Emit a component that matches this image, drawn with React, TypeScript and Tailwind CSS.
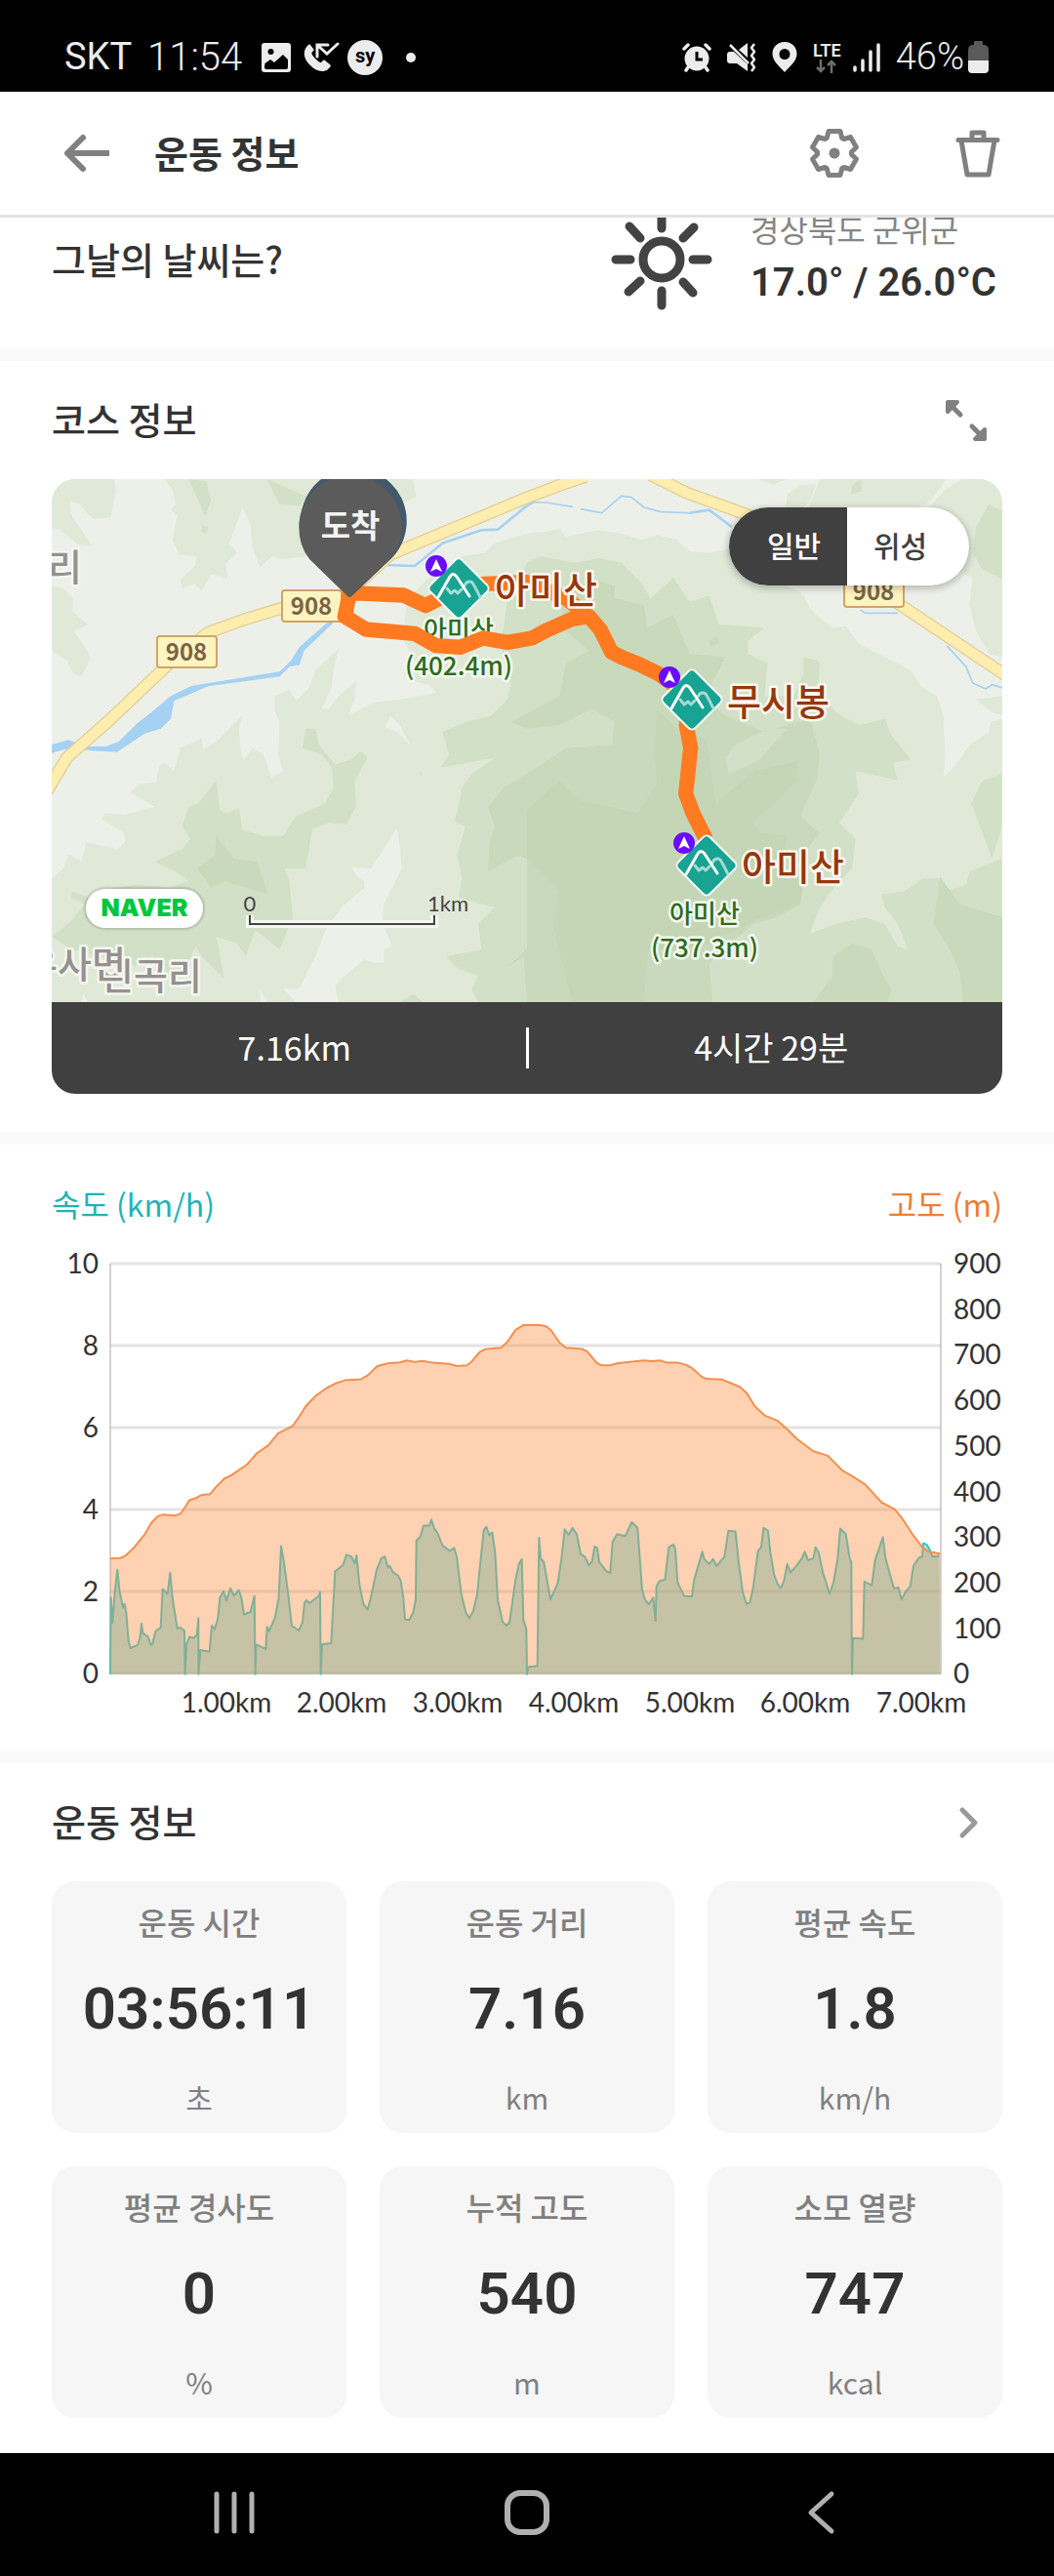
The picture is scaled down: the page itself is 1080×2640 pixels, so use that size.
import React from "react";

const ALTITUDE =
  "219,1090 250,1089 265,1083 290,1063 325,1025 345,995 365,977 380,973 420,975 435,970 450,951 462,934 480,929 500,920 525,918 545,898 570,876 590,868 640,838 670,808 705,787 735,755 780,735 800,710 820,682 850,655 885,633 910,622 940,613 990,610 1010,600 1040,575 1075,567 1110,565 1130,560 1155,564 1180,561 1210,566 1260,569 1285,575 1315,573 1330,563 1355,537 1370,530 1420,526 1440,510 1465,478 1490,465 1540,465 1560,469 1575,480 1600,512 1620,526 1670,529 1685,536 1715,567 1730,573 1755,573 1780,567 1860,560 1885,562 1910,560 1930,566 1965,566 1990,572 2010,582 2035,602 2050,609 2100,611 2125,620 2155,631 2175,647 2200,682 2230,707 2270,721 2300,744 2330,770 2380,803 2425,815 2470,855 2500,870 2540,892 2590,940 2630,958 2655,985 2685,1025 2715,1060 2735,1072 2770,1077";

const SPEED =
  "219,1400 221,1195 226,1262 233,1180 241,1120 247,1175 258,1222 263,1212 268,1235 275,1310 281,1330 303,1322 311,1300 315,1265 319,1290 335,1300 344,1322 349,1318 358,1285 374,1275 380,1172 395,1185 403,1128 410,1195 425,1278 434,1275 447,1283 449,1400 453,1320 463,1300 475,1303 485,1295 490,1250 490,1400 496,1335 524,1340 531,1270 540,1280 550,1250 556,1195 567,1178 576,1203 588,1170 600,1190 614,1175 622,1195 630,1240 650,1233 662,1190 665,1400 667,1320 697,1333 701,1273 707,1285 725,1250 737,1195 744,1057 752,1095 765,1180 777,1270 798,1283 810,1262 816,1208 822,1202 832,1210 860,1190 864,1180 866,1400 870,1320 898,1317 910,1125 935,1107 945,1080 960,1085 970,1103 976,1082 985,1160 997,1212 1010,1227 1020,1195 1038,1120 1052,1090 1063,1085 1073,1115 1078,1110 1088,1127 1103,1135 1112,1150 1120,1195 1125,1253 1138,1255 1150,1235 1158,1200 1160,1042 1172,1032 1182,1002 1200,1002 1206,986 1215,1010 1224,1020 1240,1055 1263,1070 1276,1062 1284,1085 1298,1185 1312,1235 1323,1250 1335,1230 1347,1185 1358,1090 1367,1015 1375,1005 1384,1028 1393,1020 1402,1075 1410,1200 1425,1260 1437,1270 1446,1262 1458,1190 1464,1150 1475,1105 1484,1092 1489,1255 1498,1280 1500,1400 1503,1381 1532,1378 1537,1035 1542,1090 1552,1100 1562,1150 1572,1200 1580,1185 1595,1155 1606,1090 1616,1012 1628,1027 1640,1008 1653,1025 1665,1078 1678,1085 1690,1108 1700,1098 1708,1058 1716,1062 1722,1100 1745,1125 1756,1128 1763,1046 1777,1025 1802,1030 1822,993 1840,1008 1854,1175 1863,1200 1874,1213 1888,1195 1895,1257 1898,1165 1908,1150 1924,1147 1936,1060 1950,1053 1956,1065 1963,1155 1983,1190 2007,1192 2013,1150 2028,1105 2039,1072 2045,1092 2060,1105 2072,1092 2083,1110 2107,1085 2119,1016 2141,1018 2150,1095 2163,1180 2175,1212 2185,1208 2195,1170 2210,1070 2220,1060 2227,1008 2241,1016 2248,1073 2260,1135 2270,1158 2280,1170 2290,1150 2300,1105 2310,1128 2328,1110 2345,1090 2354,1072 2364,1095 2380,1090 2387,1060 2397,1075 2410,1130 2418,1150 2430,1185 2442,1155 2455,1090 2463,1010 2480,1025 2492,1090 2497,1100 2499,1400 2502,1303 2533,1305 2537,1152 2560,1162 2570,1095 2594,1033 2602,1090 2615,1130 2628,1170 2642,1168 2651,1200 2665,1178 2678,1165 2688,1110 2705,1088 2715,1085 2718,1050 2728,1052 2740,1070 2746,1085 2768,1083";

const STATS = [
  { label: "운동 시간", value: "03:56:11", unit: "초" },
  { label: "운동 거리", value: "7.16", unit: "km" },
  { label: "평균 속도", value: "1.8", unit: "km/h" },
  { label: "평균 경사도", value: "0", unit: "%" },
  { label: "누적 고도", value: "540", unit: "m" },
  { label: "소모 열량", value: "747", unit: "kcal" },
];

const polar = (r: number, deg: number) => {
  const a = (deg * Math.PI) / 180;
  return `${(r * Math.cos(a)).toFixed(1)},${(r * Math.sin(a)).toFixed(1)}`;
};

const GEAR = [0, 1, 2, 3, 4, 5]
  .map((k) => {
    const c = -90 + k * 60;
    return `${k === 0 ? "M" : "L"}${polar(17.5, c - 26)} L${polar(23.3, c - 15)} L${polar(23.3, c + 15)} L${polar(17.5, c + 26)}`;
  })
  .join(" ");

function StatusBar() {
  return (
    <div className="flex h-[94px] items-center justify-between bg-black pt-[23px] pr-[67px] pl-[66px] font-[Roboto,sans-serif] text-[#ececec]">
      <div className="flex items-center">
        <span className="text-[38px]">SKT</span>
        <span className="ml-4 text-[40px] font-light">11:54</span>
        <svg className="ml-5 h-[30px] w-[30px]" viewBox="0 0 30 30" aria-hidden="true">
          <rect width="30" height="30" rx="3" fill="#ececec" />
          <circle cx="9.500" cy="9" r="3" fill="#000" />
          <path d="M3.500 21 L9 17 L13 20 L22 12 L27 17 V25 Q27 27 25 27 H5 Q3 27 3 25 Z" fill="#000" />
        </svg>
        <svg className="ml-3 h-[32px] w-[38px]" viewBox="0 0 38 32" fill="none" aria-hidden="true">
          <path
            d="M5 4 C0 9 1 17 7 23 C13 30 21 32 26 28 L28 26 C29 25 29 24 28 23 L23 19 C22 18 21 19 20 20 C19 22 17 21 13 17 C9 13 9 11 10 10 C12 9 12 8 11 7 L8 3 C7 2 6 3 5 4 Z"
            fill="#ececec"
          />
          <path d="M15 15 V3 H26 M16 4 L25 12 L36 2" stroke="#ececec" strokeWidth="3" strokeLinecap="round" />
        </svg>
        <span className="ml-2 flex h-9 w-9 items-center justify-center rounded-full bg-[#ececec] pb-1 text-xl font-bold text-black">
          sy
        </span>
        <span className="ml-6 h-[10px] w-[10px] rounded-full bg-[#ececec]" />
      </div>
      <div className="flex items-center">
        <svg className="h-[30px] w-[30px]" viewBox="0 0 30 30" fill="none" aria-hidden="true">
          <circle cx="15" cy="16" r="12.500" fill="#ececec" />
          <path d="M6 25 L4 28 M24 25 L26 28 M2 6 L6 2 M28 6 L24 2" stroke="#ececec" strokeWidth="3.500" strokeLinecap="round" />
          <path d="M15 9 V17 H21" stroke="#000" strokeWidth="3" />
        </svg>
        <svg className="ml-4 h-[30px] w-[30px]" viewBox="0 0 30 30" fill="none" aria-hidden="true">
          <path d="M0 12 Q0 9 3 9 H7 L21 22 V29 L10 21 H3 Q0 21 0 18 Z M12 7 L21 0 V15 Z" fill="#ececec" />
          <path d="M3 2 L22 21" stroke="#ececec" strokeWidth="2.500" />
          <path d="M28 1 L25 5 L28 9 L25 13 L28 17 L25 21 L28 25 L25 29" stroke="#ececec" strokeWidth="2.500" strokeLinejoin="round" />
        </svg>
        <svg className="ml-4 h-[31px] w-[26px]" viewBox="0 0 26 31" aria-hidden="true">
          <path
            d="M13 0 C5 0 0.500 6 0.500 12 C0.500 20 8 25 13 31 C18 25 25.500 20 25.500 12 C25.500 6 21 0 13 0 Z M13 7 A5.500 5.500 0 1 1 13 18 A5.500 5.500 0 1 1 13 7 Z"
            fill="#ececec"
            fillRule="evenodd"
          />
        </svg>
        <div className="ml-4 flex flex-col items-center">
          <span className="text-[18px] leading-[18px] font-semibold">LTE</span>
          <svg className="h-[14px] w-[22px]" viewBox="0 0 22 14" fill="none" aria-hidden="true">
            <path d="M5 0 V12 M1 8 L5 12 L9 8 M16 14 V2 M12 6 L16 2 L20 6" stroke="#6d6d6d" strokeWidth="2.500" />
          </svg>
        </div>
        <svg className="ml-3 h-[30px] w-[28px]" viewBox="0 0 28 30" fill="none" aria-hidden="true">
          <path d="M2 25 V28 M10 18 V28 M18 9 V28 M26 2 V28" stroke="#ececec" strokeWidth="3.500" strokeLinecap="round" />
        </svg>
        <span className="ml-4 text-[38px] font-light">46%</span>
        <svg className="ml-1 h-[33px] w-[21px]" viewBox="0 0 21 33" aria-hidden="true">
          <path d="M6 1 Q6 0 7 0 H14 Q15 0 15 1 V4 H17 Q21 5 21 9 V20 H0 V9 Q0 5 4 4 H6 Z" fill="#5a5a5a" />
          <path d="M0 20 H21 V29 Q21 33 17 33 H4 Q0 33 0 29 Z" fill="#ececec" />
        </svg>
      </div>
    </div>
  );
}

function Header() {
  return (
    <header className="flex h-[129px] items-center border-b-3 border-[#e3e3e3] bg-white pr-[53px] pl-[64px]">
      <button type="button" aria-label="뒤로">
        <svg className="h-[48px] w-[50px]" viewBox="0 0 50 48" fill="none" aria-hidden="true">
          <path d="M48 24 H6" stroke="#808080" strokeWidth="6" />
          <path d="M21 8 L5 24 L21 40" stroke="#808080" strokeWidth="6" strokeLinejoin="round" strokeLinecap="round" />
        </svg>
      </button>
      <h1 className="ml-[44px] flex-1 pb-1 text-[38px] font-bold">운동 정보</h1>
      <button type="button" aria-label="설정">
        <svg className="h-[56px] w-[56px]" viewBox="-28 -28 56 56" fill="none" aria-hidden="true">
          <path d={GEAR + " Z"} stroke="#808080" strokeWidth="5" strokeLinejoin="round" />
          <circle r="5.500" fill="#808080" />
        </svg>
      </button>
      <button type="button" aria-label="삭제" className="ml-[94px]">
        <svg className="h-[56px] w-[50px]" viewBox="0 0 50 56" fill="none" aria-hidden="true">
          <path
            d="M5 14.500 H45 M19 14 V7 H31 V14 M8 15 L14 50 H36 L42 15"
            stroke="#808080"
            strokeWidth="5"
            strokeLinejoin="round"
            strokeLinecap="round"
          />
        </svg>
      </button>
    </header>
  );
}

function Weather() {
  return (
    <section className="flex h-[134px] items-center overflow-hidden pr-[53px] pb-[48px] pl-[53px]">
      <h2 className="flex-1 pb-1 text-[38px] font-medium">그날의 날씨는?</h2>
      <svg className="h-[108px] w-[108px]" viewBox="-54 -54 108 108" fill="none" aria-label="맑음">
        <g stroke="#434343" strokeWidth="9" strokeLinecap="round">
          <circle r="19" />
          <path d="M0 -32 V-47 M0 32 V47 M-32 0 H-47 M32 0 H47 M-22 -22 L-33 -34 M22 -22 L33 -33 M-22 22 L-34 33 M22 23 L32 34" />
        </g>
      </svg>
      <div className="ml-[37px] w-[258px] whitespace-nowrap">
        <p className="text-[32px] leading-[48px] text-[#858585]">경상북도 군위군</p>
        <p className="font-[Roboto,sans-serif] text-[40px] leading-[64px] font-semibold">17.0° / 26.0°C</p>
      </div>
    </section>
  );
}

function RoadSign({ x, y }: { x: number; y: number }) {
  return (
    <g>
      <rect x={x + 1} y={y + 1} width="61" height="32" rx="3" fill="#fdf4c0" stroke="#cfa468" strokeWidth="2" />
      <text x={x + 31} y={y + 26} textAnchor="middle" fontSize="24" fontWeight="700" fill="#7b6444">
        908
      </text>
    </g>
  );
}

function Peak({ x, y }: { x: number; y: number }) {
  return (
    <g transform={`translate(${x} ${y})`} fill="none">
      <rect x="-23" y="-23" width="46" height="46" rx="5" transform="rotate(45)" fill="#18a393" stroke="#f4faf7" strokeWidth="2" />
      <g strokeWidth="3" strokeLinecap="round" strokeLinejoin="round">
        <path d="M6 -3 Q9 -9 14 -6 Q16 -3 22 9 M-12 0 L-8 5 L-4 2 L-1 5 L3 1" stroke="#a5dbd3" />
        <path d="M-21 9 L-9 -12 Q-6 -17 -2 -12 L11 8" stroke="#fff" />
      </g>
      <circle cx="-23" cy="-23" r="11" fill="#6a0dff" />
      <path d="M-23 -30 L-17 -17 L-23 -20 L-29 -17 Z" fill="#fff" />
    </g>
  );
}

function TrailMap() {
  return (
    <svg className="block h-auto w-full" viewBox="53 491 974 536" role="img" aria-label="아미산 코스 지도">
      <rect x="53" y="491" width="974" height="536" fill="#edf0e9" />
      <g transform="translate(40 380) scale(0.33333)">
        <g fill="#e0e9d8">
          <path d="M39 333 H230 L236 370 L220 450 L170 455 L150 440 L125 410 L95 400 L98 440 L130 490 L165 540 L120 535 L90 510 L60 485 H39 Z" />
          <path d="M39 660 L75 670 L105 700 L103 740 L150 780 L108 800 L140 850 L160 885 L130 940 L105 930 L85 890 L39 860 Z" />
          <path d="M385 333 H1150 L1160 390 L1110 410 L900 560 L750 580 L715 570 L680 605 L655 540 L650 470 L625 420 L600 490 L585 530 L610 560 L575 590 L580 640 L530 625 L500 675 L475 655 L440 670 L435 640 L480 600 L485 570 L430 565 L410 520 L425 445 L405 425 L420 410 L410 365 Z" />
          <path d="M39 1560 L75 1530 L90 1485 L130 1510 L145 1450 L240 1470 L265 1450 L260 1420 L195 1380 L200 1360 L260 1365 L300 1355 L355 1340 L280 1295 L310 1270 L360 1265 L370 1215 L385 1205 L415 1230 L435 1160 L500 1130 L505 1165 L545 1140 L625 1060 L615 1100 L620 1170 L630 1195 L655 1160 L690 1180 L715 1250 L750 1230 L735 1180 L740 1080 L725 1050 L725 1000 L770 980 L790 1015 L830 975 L850 920 L920 855 L905 920 L900 970 L870 1040 L890 1040 L920 1000 L975 955 L970 1010 L950 1060 L1030 1020 L1110 1010 L1220 990 L1200 965 L1140 950 L1120 930 L1160 900 L1120 830 L1130 700 L1240 600 L1300 570 L1370 560 L1400 530 L1500 500 L1560 495 L1600 485 L1620 510 L1720 490 L1790 500 L1850 520 L1900 505 L1960 520 L2000 555 L2060 560 L2110 550 L2130 530 L2200 600 L2240 640 L2320 670 L2350 690 L2370 730 L2400 760 L2440 790 L2480 785 L2520 840 L2600 880 L2680 920 L2710 970 L2760 1000 L2780 1060 L2785 1180 L2780 1250 L2820 1210 L2860 1150 L2920 1110 L2925 1080 L2961 1070 V1941 H39 Z" />
          <path d="M2210 333 L2255 350 L2300 333 Z M2340 350 L2390 350 L2370 400 L2320 450 L2290 480 L2300 380 Z M2400 333 H2790 L2740 400 L2680 430 L2500 450 L2350 460 Z M2840 333 H2961 V880 L2920 870 L2880 800 L2860 720 L2870 640 L2800 600 L2690 560 L2640 500 L2720 440 L2780 370 Z M2880 1010 L2961 1000 V1060 L2930 1050 Z" />
        </g>
        <g fill="#edf0e9">
          <path d="M1100 1405 L1110 1470 L1115 1530 L1090 1580 L1060 1640 L1055 1700 L1085 1768 L1060 1780 L1060 1820 L1030 1820 L1000 1810 L950 1850 L910 1890 L920 1941 H790 L750 1900 L800 1900 L850 1800 L880 1720 L930 1650 L1000 1590 L1000 1570 L975 1550 L960 1525 L1020 1530 L1060 1470 Z" />
          <path d="M1065 1095 L1080 1060 L1110 1090 L1140 1150 L1100 1110 Z M680 1900 L700 1941 H680 Z M135 1915 L150 1941 H130 Z" />
        </g>
        <g fill="#d3e0c8">
          <path d="M460 333 L515 340 L528 400 L510 450 L490 400 Z M500 475 L520 480 L515 500 L500 495 Z M700 333 L830 390 L800 415 L740 410 Z" />
          <path d="M2500 350 L2525 335 L2530 370 L2495 380 Z M2920 410 L2961 430 V640 L2900 610 L2870 560 L2880 480 Z" />
          <path d="M1500 590 L1540 570 L1650 590 L1720 575 L1790 590 L1850 650 L1880 700 L1950 635 L2000 710 L2060 690 L2090 780 L2230 790 L2180 830 L2180 870 L2240 900 L2230 1000 L2320 1000 L2350 930 L2350 880 L2400 895 L2395 980 L2450 1050 L2520 1090 L2600 1070 L2620 1120 L2680 1195 L2625 1205 L2640 1260 L2510 1230 L2520 1300 L2460 1390 L2510 1440 L2500 1530 L2450 1580 L2400 1650 L2370 1730 L2450 1700 L2540 1680 L2600 1700 L2640 1770 L2670 1780 L2640 1700 L2600 1650 L2590 1610 L2660 1600 L2720 1560 L2770 1560 L2790 1600 L2850 1580 L2860 1540 L2961 1500 V1941 H1350 L1330 1900 L1350 1860 L1290 1840 L1250 1800 L1360 1780 L1350 1700 L1400 1650 L1290 1620 L1300 1560 L1285 1490 L1310 1400 L1275 1385 L1290 1340 L1300 1280 L1330 1240 L1400 1190 L1235 1220 L1260 1180 L1240 1110 L1310 1080 L1390 1060 L1440 1010 L1450 960 L1420 850 L1440 700 Z" />
          <path d="M545 1258 L555 1350 L580 1360 L615 1345 L625 1410 L690 1430 L750 1430 L790 1370 L880 1330 L905 1280 L900 1220 L870 1180 L810 1160 L820 1100 L850 1100 L860 1150 L910 1210 L960 1195 L990 1170 L1010 1190 L970 1260 L975 1340 L945 1395 L890 1390 L840 1410 L820 1530 L755 1530 L770 1570 L780 1680 L740 1780 L665 1720 L635 1800 L610 1760 L545 1740 L570 1870 L500 1800 L480 1770 L440 1860 L390 1870 L350 1800 L300 1830 L100 1780 L39 1740 L100 1690 L140 1640 L100 1620 L100 1600 L150 1620 L230 1590 L300 1580 L400 1590 L460 1570 L420 1540 L355 1510 L440 1470 L465 1440 L440 1400 L460 1340 L490 1330 Z" />
          <path d="M2900 1260 L2961 1240 V1400 L2930 1500 L2865 1330 Z M1110 1941 L1150 1915 L1180 1941 Z M1165 1232 L1178 1235 L1175 1242 Z" />
        </g>
        <g fill="#c8dabb">
          <path d="M545 1430 L600 1500 L670 1510 L705 1610 L640 1590 L570 1570 L530 1590 L485 1530 L540 1490 Z" />
          <path d="M1600 700 L1700 640 L1770 660 L1770 700 L1860 720 L1870 790 L1950 750 L2000 870 L2110 880 L2070 960 L2040 1000 L2110 1060 L2230 1110 L2370 1070 L2400 1180 L2390 1260 L2340 1370 L2400 1420 L2370 1460 L2330 1520 L2350 1560 L2340 1640 L2270 1680 L2200 1700 L2100 1780 L2060 1820 L2070 1941 H1500 L1490 1800 L1430 1840 L1500 1780 L1500 1500 L1470 1490 L1380 1540 L1385 1450 L1400 1400 L1380 1340 L1430 1280 L1500 1240 L1620 1160 L1760 1150 L1770 1080 L1700 1040 L1600 1090 L1500 1100 L1450 1080 L1600 1000 L1620 900 L1690 860 L1620 800 Z" />
          <path d="M2380 1941 L2440 1860 L2440 1800 L2500 1760 L2560 1780 L2590 1850 L2620 1900 L2610 1941 Z M2770 1555 L2830 1640 L2961 1680 V1941 H2840 L2830 1850 L2800 1780 L2750 1700 Z M2060 830 L2085 815 L2090 835 L2065 850 Z" />
          <path d="M2140 1150 L2240 1100 L2300 1100 L2210 1200 L2120 1240 L2110 1190 Z" fill="#d3e0c8" />
        </g>
        <path
          fill="#c4d6b5"
          d="M1600 1260 L1660 1320 L1840 1360 L1900 1270 L1890 1170 L1900 1040 L1960 1100 L2050 1130 L2080 1330 L2200 1230 L2330 1200 L2330 1260 L2260 1330 L2190 1390 L2220 1420 L2300 1430 L2280 1540 L2350 1560 L2340 1640 L2200 1690 L2060 1760 L1960 1780 L1870 1780 L1860 1941 H1640 L1620 1870 L1580 1700 L1600 1600 L1500 1500 L1500 1350 Z"
        />
        <g fill="#a5d2f2">
          <path d="M39 1150 L90 1135 L150 1155 L205 1155 L245 1140 L300 1085 L345 1050 L405 1000 L470 968 L740 925 L775 890 L800 850 L890 770 L905 775 L815 860 L800 905 L770 910 L740 940 L520 970 L415 1015 L405 1070 L375 1100 L325 1115 L240 1172 L160 1168 L95 1160 L39 1175 Z" />
        </g>
        <g fill="none" stroke="#a5d2f2" strokeLinejoin="round">
          <path strokeWidth="8" d="M1060 597 L1155 600 L1240 530 L1360 490 L1410 488 L1500 415 L1520 404 M2000 437 L2060 428 L2130 480" />
          <path strokeWidth="5" d="M1500 403 L1560 405 L1640 418 M1665 425 L1730 437 L1790 385 L1820 388 L1860 420 L1910 433 L2010 438 M2525 735 L2540 745 H2640 M2790 845 L2850 910 L2870 960 L2910 978 L2930 965 L2961 975" />
        </g>
        <g fill="none" strokeLinejoin="round">
          <path stroke="#e3cf96" strokeWidth="39" d="M20 1300 L85 1190 L210 1080 L400 900 L520 805 L630 765 L745 730 L930 700 L1080 565 L1500 390 L1600 352 L1680 325 M1880 320 L1990 375 L2170 440 L2300 500 L2500 620 L2640 715 L2980 942" />
          <path stroke="#fdeeb0" strokeWidth="31" d="M20 1300 L85 1190 L210 1080 L400 900 L520 805 L630 765 L745 730 L930 700 L1080 565 L1500 390 L1600 352 L1680 325 M1880 320 L1990 375 L2170 440 L2300 500 L2500 620 L2640 715 L2980 942" />
        </g>
      </g>
      <g
        fontFamily="'Noto Sans CJK KR', sans-serif"
        stroke="#f4f7f0"
        strokeWidth="5"
        strokeLinejoin="round"
        paintOrder="stroke"
        fontWeight="500"
      >
        <g fontSize="38" fill="#989090">
          <text x="49" y="595">리</text>
          <text x="102" y="1014">인곡리</text>
          <text x="24" y="1002">우사면</text>
        </g>
        <g fontSize="26" fill="#2f6b1b" textAnchor="middle">
          <text x="470" y="655">아미산</text>
          <text x="470" y="692">(402.4m)</text>
          <text x="722" y="946">아미산</text>
          <text x="722" y="981">(737.3m)</text>
        </g>
      </g>
      <g fontFamily="'Noto Sans CJK KR', sans-serif">
        <RoadSign x={160} y={651} />
        <RoadSign x={288} y={604} />
        <RoadSign x={864} y={589} />
      </g>
      <g transform="translate(40 380) scale(0.33333)" fill="none" stroke="#ff7a20" strokeWidth="46" strokeLinejoin="round">
        <path d="M955 683 L1120 690 L1188 722 L1290 670 L1370 655 L1500 650 L1620 700 L1690 755 M955 683 L940 755 L1005 795 L1155 808 L1220 845 L1295 850 L1365 822 L1440 835 L1515 822 L1560 798 L1640 763 L1690 755 L1725 795 L1760 865 L1790 880 L1850 905 L1905 932 L2000 1000 L1990 1090 L2003 1160 L1988 1300 L2010 1360 L2050 1440" />
      </g>
      <Peak x={470} y={603} />
      <Peak x={709} y={717} />
      <Peak x={724} y={887} />
      <g
        fontFamily="'Noto Sans CJK KR', sans-serif"
        fontSize="38"
        fontWeight="500"
        fill="#96380a"
        stroke="#fbf8f2"
        strokeWidth="5"
        strokeLinejoin="round"
        paintOrder="stroke"
      >
        <text x="507" y="618">아미산</text>
        <text x="745" y="733">무시봉</text>
        <text x="760" y="902">아미산</text>
      </g>
      <g transform="translate(40 380) scale(0.33333)">
        <path d="M957 697 L1085 575 A163 163 0 1 0 845 570 Z" fill="#44586c" />
        <path d="M952 697 L832 580 Q799 540 799 480 A158 158 0 0 1 1115 480 Q1115 540 1080 575 Z" fill="#5b5b5b" />
      </g>
      <text x="359" y="551" textAnchor="middle" fontFamily="'Noto Sans CJK KR', sans-serif" fontSize="33" fontWeight="700" fill="#f4f4f4">
        도착
      </text>
      <path d="M256 938 V947 H445 V938" fill="none" stroke="#f5f8f2" strokeWidth="8" />
      <path d="M256 938 V947 H445 V938" fill="none" stroke="#444" strokeWidth="2" />
      <g fontFamily="Lato, sans-serif" fontSize="22" fill="#444">
        <text x="256" y="934" textAnchor="middle">0</text>
        <text x="438" y="934">1km</text>
      </g>
    </svg>
  );
}

function Course() {
  return (
    <section className="px-[53px] pb-[39px]">
      <div className="flex h-[121px] items-center justify-between pr-3">
        <h2 className="pb-1 text-[38px] font-medium">코스 정보</h2>
        <button type="button" aria-label="지도 확대">
          <svg className="h-[50px] w-[50px]" viewBox="0 0 50 50" aria-hidden="true">
            <g fill="#808080" stroke="#808080" strokeLinejoin="round" strokeLinecap="round">
              <path d="M6 6 H16 L6 16 Z M44 44 H34 L44 34 Z" strokeWidth="4" />
              <path d="M7 7 L19 19 M43 43 L31 31" strokeWidth="5" />
            </g>
          </svg>
        </button>
      </div>
      <div className="overflow-hidden rounded-3xl">
        <div className="relative">
          <TrailMap />
          <div className="absolute top-[29px] right-[34px] flex h-20 w-[246px] overflow-hidden rounded-full bg-white text-[30px] font-medium shadow-[0_2px_6px_2px_rgba(0,0,0,0.2)]">
            <button type="button" className="flex-1 bg-[#404040] pb-1 pl-3 text-white">
              일반
            </button>
            <button type="button" className="flex-1 pr-4 pb-1 text-[#404040]">
              위성
            </button>
          </div>
          <div className="absolute bottom-[76px] left-[35px] flex h-10 w-[120px] items-center justify-center rounded-full bg-white font-[Inter,sans-serif] text-[25px] font-black text-[#03c73c] shadow-[0_0_2px_2px_rgba(0,0,0,0.15)]">
            NAVER
          </div>
        </div>
        <div className="flex h-[94px] items-center bg-[#404040] text-center text-[34px] text-white">
          <span className="flex-1 pb-1 pl-3">7.16km</span>
          <span className="h-[42px] w-[3px] bg-white" />
          <span className="flex-1 pb-1 pl-3">4시간 29분</span>
        </div>
      </div>
    </section>
  );
}

function Chart() {
  return (
    <section>
      <div className="flex h-[92px] items-center justify-between px-[53px] pt-7 text-[32px]">
        <span className="text-[#1fb3b8]">속도 (km/h)</span>
        <span className="text-[#ef7d31]">고도 (m)</span>
      </div>
      <svg className="block h-auto w-full" viewBox="0 1265 1080 529" role="img" aria-label="속도와 고도 그래프">
        <g stroke="#e3e3e3" strokeWidth="3">
          {[0, 1, 2, 3, 4, 5].map((i) => (
            <line key={i} x1="113" x2="964" y1={1295 + i * 84} y2={1295 + i * 84} />
          ))}
        </g>
        <path d="M113 1295 V1716 M964 1295 V1716" stroke="#a5a5a5" strokeWidth="1" />
        <g transform="translate(40 1180) scale(0.33333 0.3827)" strokeLinejoin="round">
          <polygon points={SPEED + " 2770,1400"} fill="#2fc8cf" fillOpacity="0.45" />
          <polyline points={SPEED} fill="none" stroke="#2fc8cf" strokeWidth="2" vectorEffect="non-scaling-stroke" />
          <polygon points={"219,1400 " + ALTITUDE + " 2770,1400"} fill="#ff8c41" fillOpacity="0.4" />
          <polyline points={ALTITUDE} fill="none" stroke="#f58f4c" strokeWidth="2" vectorEffect="non-scaling-stroke" />
        </g>
        <g fontFamily="Lato, sans-serif" fontSize="28" fill="#333">
          {[10, 8, 6, 4, 2, 0].map((v, i) => (
            <text key={v} x="101" y={1305 + i * 84} textAnchor="end">
              {v}
            </text>
          ))}
          {[900, 800, 700, 600, 500, 400, 300, 200, 100, 0].map((v, i) => (
            <text key={v} x="977" y={Math.round(1305 + i * 46.7)}>
              {v}
            </text>
          ))}
          {[1, 2, 3, 4, 5, 6, 7].map((v) => (
            <text key={v} x={Math.round(113 + v * 118.7)} y="1755" textAnchor="middle">
              {v}.00km
            </text>
          ))}
        </g>
      </svg>
    </section>
  );
}

function Stats() {
  return (
    <section className="px-[53px] pb-9">
      <div className="flex h-[121px] items-center justify-between pr-[18px]">
        <h2 className="pb-1 text-[38px] font-medium">운동 정보</h2>
        <button type="button" aria-label="운동 정보 더 보기">
          <svg className="h-10 w-[34px]" viewBox="0 0 34 40" fill="none" aria-hidden="true">
            <path d="M11 7 L24 20 L11 33" stroke="#999" strokeWidth="5" strokeLinecap="round" strokeLinejoin="round" />
          </svg>
        </button>
      </div>
      <div className="grid grid-cols-3 gap-[34px]">
        {STATS.map((s) => (
          <div
            key={s.label}
            className="flex h-[258px] flex-col items-center justify-between rounded-3xl bg-[#f6f6f6] pt-[17px] pb-[13px] text-[#808080]"
          >
            <span className="text-[32px] leading-[48px] font-medium">{s.label}</span>
            <span className="font-[Roboto,sans-serif] text-[60px] leading-[80px] font-semibold text-[#333]">
              {s.value}
            </span>
            <span className="text-[30px] leading-[48px]">{s.unit}</span>
          </div>
        ))}
      </div>
    </section>
  );
}

function SystemNav() {
  return (
    <nav className="flex h-[126px] items-center justify-between bg-black px-[20%] pb-1">
      <button type="button" aria-label="최근 앱">
        <svg className="h-12 w-12" viewBox="0 0 48 48" fill="none" aria-hidden="true">
          <path d="M6 5 V43 M24 5 V43 M42 5 V43" stroke="#b0b0b0" strokeWidth="5" strokeLinecap="round" />
        </svg>
      </button>
      <button type="button" aria-label="홈">
        <svg className="h-12 w-12" viewBox="0 0 48 48" fill="none" aria-hidden="true">
          <rect x="4" y="4" width="40" height="40" rx="13" stroke="#b0b0b0" strokeWidth="6" />
        </svg>
      </button>
      <button type="button" aria-label="뒤로 가기">
        <svg className="h-12 w-12" viewBox="0 0 48 48" fill="none" aria-hidden="true">
          <path d="M36 5 L15 24 L36 43" stroke="#b0b0b0" strokeWidth="5" strokeLinecap="round" strokeLinejoin="round" />
        </svg>
      </button>
    </nav>
  );
}

function Divider() {
  return <div className="h-[13px] bg-[#fafafa]" />;
}

export default function App() {
  return (
    <div className="w-full bg-white font-['Noto_Sans_CJK_KR',sans-serif] text-[#333]">
      <StatusBar />
      <Header />
      <main>
        <Weather />
        <Divider />
        <Course />
        <Divider />
        <Chart />
        <Divider />
        <Stats />
      </main>
      <SystemNav />
    </div>
  );
}
